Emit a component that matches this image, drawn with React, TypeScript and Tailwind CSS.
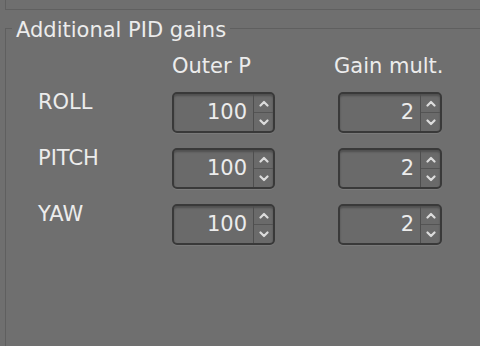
import React from "react";

type SpinnerProps = {
	value: number;
	width: string;
};

function Chevron({ up }: { up: boolean }) {
	return (
		<svg width="10" height="7" viewBox="0 0 10 7" className="text-[#dcdcdc]">
			<path
				d={up ? "M1.5 5.5 L5 2 L8.5 5.5" : "M1.5 1.5 L5 5 L8.5 1.5"}
				fill="none"
				stroke="currentColor"
				strokeWidth="2.2"
				strokeLinecap="round"
				strokeLinejoin="round"
			/>
		</svg>
	);
}

function Spinner(props: SpinnerProps) {
	const { value, width } = props;

	return (
		<div
			className={`${width} flex h-[41px] rounded-[5px] border-2 border-[#393939] bg-[#6a6a6a]
				shadow-[inset_0_2px_2px_rgba(0,0,0,0.25),0_1px_0_rgba(255,255,255,0.08)]`}
		>
			<div className="flex flex-1 items-center justify-end pr-[6px] text-[21px] leading-none text-[#ececec]">
				{value}
			</div>
			<div className="flex w-[20px] flex-col border-l border-[#4e4e4e]">
				<div className="flex flex-1 items-center justify-center border-b border-[#545454]">
					<Chevron up />
				</div>
				<div className="flex flex-1 items-center justify-center">
					<Chevron up={false} />
				</div>
			</div>
		</div>
	);
}

const rows = ["ROLL", "PITCH", "YAW"];

export default function App() {
	return (
		<div
			className="flex h-[346px] w-[480px] flex-col overflow-hidden bg-[#6f6f6f]"
			style={{ fontFamily: '"DejaVu Sans", "Liberation Sans", sans-serif' }}
		>
			<div className="ml-[5px] h-[10px] shrink-0 border-b border-l border-[#606060]" />

			<fieldset className="mt-[6px] ml-[5px] flex-1 border-t border-l border-[#5f5f5f]">
				<legend className="ml-[6px] px-[4px] pt-[4px] text-[21px] leading-none text-[#ececec]">
					Additional PID gains
				</legend>

				<div className="mt-[15px] flex pl-[166px] text-[21px] leading-none text-[#ececec]">
					<span className="w-[162px]">Outer P</span>
					<span>Gain mult.</span>
				</div>

				<div className="mt-[15px] flex flex-col gap-[15px] pl-[32px]">
					{rows.map((row) => (
						<div key={row} className="flex items-start">
							<span className="w-[134px] text-[21px] leading-none text-[#ececec]">{row}</span>
							<Spinner value={100} width="w-[103px]" />
							<div className="w-[63px]" />
							<Spinner value={2} width="w-[104px]" />
						</div>
					))}
				</div>
			</fieldset>
		</div>
	);
}
